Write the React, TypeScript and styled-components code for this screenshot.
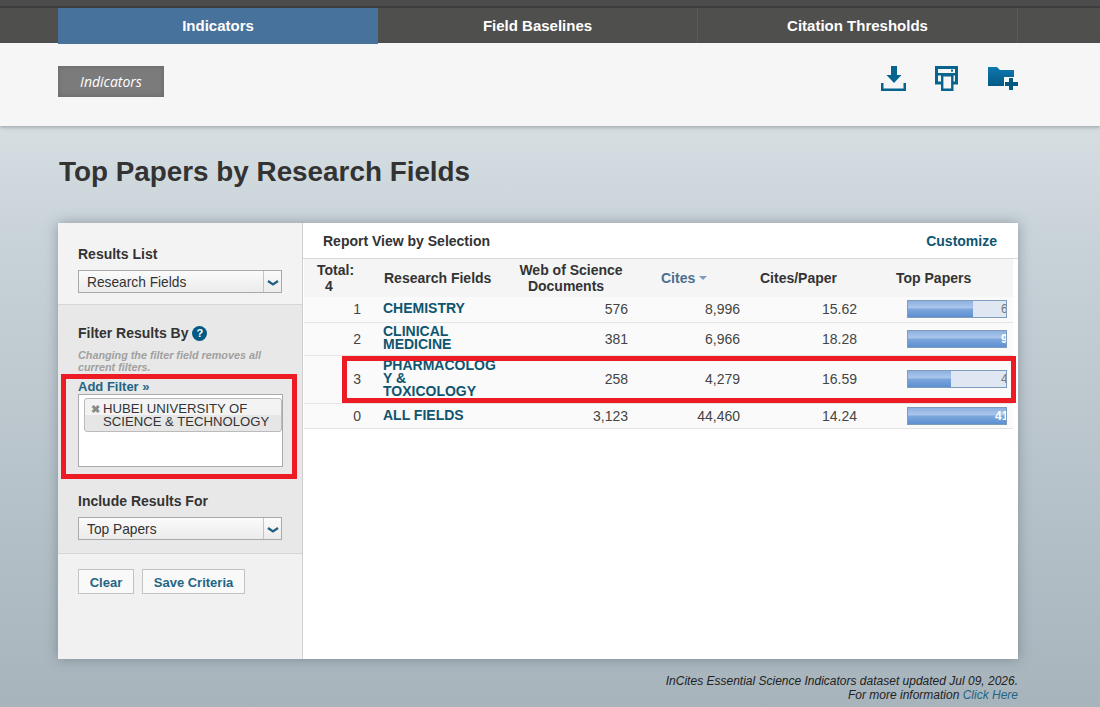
import React from "react";
import styled, { createGlobalStyle } from "styled-components";

const GlobalStyle = createGlobalStyle`
  html, body { margin: 0; padding: 0; }
  body { font-family: "Liberation Sans", Arial, sans-serif; color: #333; }
  * { box-sizing: border-box; }
`;

const Page = styled.div`
  position: relative;
  width: 1100px;
  height: 707px;
  overflow: hidden;
  background: linear-gradient(180deg, #d6dee2 126px, #c9d3d9 230px, #a7b4bc 100%);
`;

const TopStrip = styled.div`
  height: 8px;
  background: #4c4c4c;
  border-bottom: 2px solid #3e3e3e;
`;

const NavBar = styled.nav`
  height: 35px;
  background: #4f4f4e;
  padding: 0 82px 0 58px;
  display: flex;
`;

const Tab = styled.div<{ $active?: boolean }>`
  width: 320px;
  height: ${(p) => (p.$active ? "36px" : "35px")};
  padding-bottom: ${(p) => (p.$active ? "1px" : "0")};
  display: flex;
  align-items: center;
  justify-content: center;
  color: #fff;
  font-size: 15px;
  font-weight: bold;
  background: ${(p) => (p.$active ? "#47729c" : "transparent")};
  border-right: ${(p) => (p.$active ? "none" : "1px solid #5a5a5a")};
  position: relative;
  z-index: 1;
`;

const SubBand = styled.div`
  height: 83px;
  background: #f6f6f6;
  box-shadow: 0 1px 4px rgba(60, 70, 75, 0.45);
  padding: 23px 82px 0 58px;
  display: flex;
  justify-content: space-between;
  align-items: flex-start;
`;

const Crumb = styled.div`
  width: 106px;
  height: 31px;
  background: #7b7b7b;
  box-shadow: inset 0 0 5px #666;
  color: #fff;
  font-family: "Open Sans", sans-serif;
  font-style: italic;
  font-size: 14px;
  display: flex;
  align-items: center;
  justify-content: center;
`;

const Actions = styled.div`
  display: flex;
  align-items: flex-start;
`;

const ActionIcon = styled.svg<{ $gap?: number }>`
  display: block;
  margin-left: ${(p) => p.$gap ?? 0}px;
`;

const Title = styled.h1`
  margin: 0;
  padding: 28px 0 0 59px;
  height: 97px;
  font-size: 27.85px;
  line-height: 35px;
  font-weight: bold;
  color: #333;
`;

const Panel = styled.main`
  width: 960px;
  height: 436px;
  margin-left: 58px;
  display: flex;
  background: #fff;
  box-shadow: 0 0 12px rgba(70, 85, 95, 0.45);
`;

const Sidebar = styled.aside`
  width: 245px;
  flex: none;
  display: flex;
  flex-direction: column;
  background: #f1f1f1;
  border-right: 1px solid #cfcfcf;
`;

const ResultsSection = styled.section`
  height: 82px;
  padding: 23px 20px 0;
  border-bottom: 1px solid #d6d6d6;
  background: #f3f3f3;
`;

const FilterSection = styled.section`
  height: 249px;
  padding: 20px 20px 0;
  background: #e8e8e8;
  border-bottom: 1px solid #d6d6d6;
`;

const ButtonSection = styled.section`
  flex: 1;
  padding: 15px 20px 0;
  display: flex;
  align-items: flex-start;
  gap: 8px;
`;

const SideLabel = styled.div<{ $top?: number }>`
  margin-top: ${(p) => p.$top ?? 0}px;
  font-size: 14px;
  line-height: 16px;
  font-weight: bold;
  color: #333;
  display: flex;
  align-items: center;
  gap: 4px;
`;

const HelpDot = styled.span`
  width: 15px;
  height: 15px;
  border-radius: 50%;
  background: #005a84;
  color: #fff;
  font-size: 11px;
  font-weight: bold;
  display: inline-flex;
  align-items: center;
  justify-content: center;
`;

const Hint = styled.p`
  margin: 8px 0 0;
  font-size: 10.8px;
  line-height: 12px;
  font-weight: bold;
  font-style: italic;
  color: #a0a0a0;
`;

const AddFilter = styled.a`
  display: block;
  margin-top: 7px;
  font-size: 13px;
  line-height: 14px;
  font-weight: bold;
  color: #1f6585;
`;

const FilterBox = styled.div`
  width: 205px;
  height: 73px;
  padding: 3px 0 0 5px;
  background: #fff;
  border: 1px solid #aaa;
`;

const FilterChip = styled.div`
  width: 198px;
  height: 34px;
  padding: 3px 0 0 6px;
  border: 1px solid #bbb;
  border-radius: 3px;
  background: linear-gradient(180deg, #f3f3f3 50%, #e6e6e6 50%);
  display: flex;
  gap: 3px;
  font-size: 13.15px;
  line-height: 13px;
  color: #333;
`;

const ChipClose = styled.span`
  color: #8a8a8a;
  font-size: 11px;
  font-weight: bold;
  line-height: 14px;
`;

const SelectBox = styled.div`
  margin-top: 8px;
  width: 204px;
  height: 23px;
  border: 1px solid #a9a9a9;
  background: linear-gradient(180deg, #fbfbfb, #ebebeb);
  display: flex;
  align-items: center;
  font-size: 13.75px;
  color: #333;
  padding-left: 8px;
`;

const SelectText = styled.span`
  flex: 1;
  padding-top: 1px;
`;

const SelectArrow = styled.span`
  width: 18px;
  height: 100%;
  border-left: 1px solid #c4c4c4;
  display: flex;
  align-items: center;
  justify-content: center;
  padding-top: 3px;
`;

const Button = styled.button<{ $width: number }>`
  width: ${(p) => p.$width}px;
  height: 25px;
  padding: 1px 0 0;
  border: 1px solid #c2c2c2;
  background: #f9f9f9;
  color: #1f6585;
  font-family: inherit;
  font-size: 13px;
  font-weight: bold;
`;

const Report = styled.div`
  flex: 1;
  display: flex;
  flex-direction: column;
`;

const ReportHead = styled.div`
  height: 36px;
  padding: 0 21px 0 20px;
  border-bottom: 1px solid #d9d9d9;
  display: flex;
  align-items: center;
  justify-content: space-between;
`;

const ReportTitle = styled.div`
  font-size: 14px;
  font-weight: bold;
  color: #333;
`;

const Customize = styled.a`
  font-size: 14px;
  font-weight: bold;
  color: #0f5570;
`;

const Table = styled.table`
  width: 709px;
  margin-left: 1px;
  border-collapse: collapse;
  table-layout: fixed;
`;

const HeadRow = styled.tr`
  height: 38px;
  background: #f5f5f5;
`;

const Th = styled.th<{ $align?: string; $pad?: number; $sorted?: boolean }>`
  padding: 0;
  padding-left: ${(p) => p.$pad ?? 0}px;
  text-align: ${(p) => p.$align ?? "left"};
  font-size: 14px;
  line-height: 16px;
  font-weight: bold;
  color: ${(p) => (p.$sorted ? "#4b6f91" : "#333")};
`;

const TotalCount = styled.span`
  display: block;
  padding-left: 8px;
`;

const DocsLine = styled.span`
  display: block;
  padding-right: 10px;
`;

const SortCaret = styled.span`
  display: inline-block;
  width: 0;
  height: 0;
  margin-left: 4px;
  vertical-align: 3px;
  border-left: 4px solid transparent;
  border-right: 4px solid transparent;
  border-top: 4px solid #7d9cc0;
`;

const Row = styled.tr<{ $height: number }>`
  height: ${(p) => p.$height}px;
  background: #fafafa;
  border-bottom: 1px solid #e4e4e4;
`;

const NumCell = styled.td<{ $pr: number }>`
  padding: 0 ${(p) => p.$pr}px 0 0;
  text-align: right;
  font-size: 14px;
  color: #444;
`;

const FieldCell = styled.td`
  padding: 0 0 1px 11px;
  font-size: 14px;
  line-height: 13px;
  font-weight: bold;
  color: #0f5570;
  overflow-wrap: anywhere;
`;

const BarCell = styled.td`
  padding: 0 0 0 38px;
`;

const Bar = styled.div`
  position: relative;
  width: 100px;
  height: 18px;
  overflow: hidden;
  background: #dfe7f3;
  border: 1px solid #7f9bbd;
`;

const BarFill = styled.div`
  height: 100%;
  background: linear-gradient(180deg, #8db0e0 0%, #adc8ec 45%, #7ea8de 48%, #5d8fd0 100%);
`;

const BarLabel = styled.span<{ $light?: boolean; $left: number }>`
  position: absolute;
  top: 1px;
  left: ${(p) => p.$left}px;
  font-size: 12px;
  line-height: 14px;
  font-weight: ${(p) => (p.$light ? "bold" : "normal")};
  color: ${(p) => (p.$light ? "#fff" : "#777")};
  white-space: nowrap;
`;

const Footer = styled.footer`
  width: 960px;
  margin: 15px 0 0 58px;
  text-align: right;
  font-size: 12px;
  line-height: 14px;
  font-style: italic;
  color: #222;
`;

const FooterLink = styled.a`
  color: #1f6585;
`;

const Callout = styled.div<{ $x: number; $y: number; $w: number; $h: number }>`
  position: absolute;
  left: ${(p) => p.$x}px;
  top: ${(p) => p.$y}px;
  width: ${(p) => p.$w}px;
  height: ${(p) => p.$h}px;
  border: 5px solid #ed1c24;
  pointer-events: none;
`;

const Chevron = () => (
  <svg width="12" height="6" viewBox="0 0 12 6" aria-hidden>
    <path d="M1 1 L6 4.5 L11 1" fill="none" stroke="#1d5f85" strokeWidth="2.2" />
  </svg>
);

const rows = [
  { rank: 1, field: "CHEMISTRY", docs: "576", cites: "8,996", perPaper: "15.62", top: 6, pct: 66, h: 25 },
  { rank: 2, field: "CLINICAL MEDICINE", docs: "381", cites: "6,966", perPaper: "18.28", top: 9, pct: 100, h: 33 },
  { rank: 3, field: "PHARMACOLOGY & TOXICOLOGY", docs: "258", cites: "4,279", perPaper: "16.59", top: 4, pct: 44, h: 48 },
  { rank: 0, field: "ALL FIELDS", docs: "3,123", cites: "44,460", perPaper: "14.24", top: 41, pct: 100, h: 25 },
];

export default function App() {
  return (
    <Page>
      <GlobalStyle />
      <TopStrip />
      <NavBar>
        <Tab $active>Indicators</Tab>
        <Tab>Field Baselines</Tab>
        <Tab>Citation Thresholds</Tab>
      </NavBar>
      <SubBand>
        <Crumb>Indicators</Crumb>
        <Actions>
          <ActionIcon width="25" height="25" viewBox="0 0 25 25">
            <path d="M10 0h6v9h4.5l-7.5 8-7.5-8H10z" fill="#07648f" />
            <path d="M1.25 17v6.75h22.5V17" fill="none" stroke="#07648f" strokeWidth="2.5" />
          </ActionIcon>
          <ActionIcon $gap={29} width="23" height="25" viewBox="0 0 23 25">
            <path d="M1.5 1.5h20v15.5h-20z" fill="none" stroke="#07648f" strokeWidth="3" />
            <rect x="3" y="7" width="17" height="2.5" fill="#07648f" />
            <rect x="16" y="3.6" width="2" height="2" fill="#07648f" />
            <path d="M7.2 9.2h10.1v14.6H7.2z" fill="#f6f6f6" stroke="#07648f" strokeWidth="2.4" />
          </ActionIcon>
          <ActionIcon $gap={30} width="30" height="25" viewBox="0 0 30 25">
            <defs>
              <linearGradient id="folderFill" x1="0" y1="0" x2="0" y2="1">
                <stop offset="0" stopColor="#0d78b0" />
                <stop offset="1" stopColor="#045a85" />
              </linearGradient>
            </defs>
            <path d="M0 1h9l3 3h14v16H0z" fill="url(#folderFill)" />
            <rect x="16" y="11" width="14" height="13" fill="#f6f6f6" />
            <path d="M21 12h4v4h5v4h-5v4h-4v-4h-4v-4h4z" fill="#055a80" />
          </ActionIcon>
        </Actions>
      </SubBand>
      <Title>Top Papers by Research Fields</Title>
      <Panel>
        <Sidebar>
          <ResultsSection>
            <SideLabel>Results List</SideLabel>
            <SelectBox>
              <SelectText>Research Fields</SelectText>
              <SelectArrow><Chevron /></SelectArrow>
            </SelectBox>
          </ResultsSection>
          <FilterSection>
            <SideLabel>Filter Results By <HelpDot>?</HelpDot></SideLabel>
            <Hint>Changing the filter field removes all current filters.</Hint>
            <AddFilter>Add Filter »</AddFilter>
            <FilterBox>
              <FilterChip>
                <ChipClose>✖</ChipClose>
                <span>HUBEI UNIVERSITY OF<br />SCIENCE &amp; TECHNOLOGY</span>
              </FilterChip>
            </FilterBox>
            <SideLabel $top={26}>Include Results For</SideLabel>
            <SelectBox>
              <SelectText>Top Papers</SelectText>
              <SelectArrow><Chevron /></SelectArrow>
            </SelectBox>
          </FilterSection>
          <ButtonSection>
            <Button $width={56}>Clear</Button>
            <Button $width={103}>Save Criteria</Button>
          </ButtonSection>
        </Sidebar>
        <Report>
          <ReportHead>
            <ReportTitle>Report View by Selection</ReportTitle>
            <Customize>Customize</Customize>
          </ReportHead>
          <Table>
            <colgroup>
              <col width="68" />
              <col width="124" />
              <col width="144" />
              <col width="112" />
              <col width="117" />
              <col width="144" />
            </colgroup>
            <thead>
              <HeadRow>
                <Th $pad={13}>Total:<TotalCount>4</TotalCount></Th>
                <Th $pad={12}>Research Fields</Th>
                <Th $align="center" $pad={6}>Web of Science<DocsLine>Documents</DocsLine></Th>
                <Th $pad={21} $sorted>Cites<SortCaret /></Th>
                <Th $pad={8}>Cites/Paper</Th>
                <Th $pad={27}>Top Papers</Th>
              </HeadRow>
            </thead>
            <tbody>
              {rows.map((r) => (
                <Row key={r.rank} $height={r.h}>
                  <NumCell $pr={11}>{r.rank}</NumCell>
                  <FieldCell>{r.field}</FieldCell>
                  <NumCell $pr={12}>{r.docs}</NumCell>
                  <NumCell $pr={12}>{r.cites}</NumCell>
                  <NumCell $pr={12}>{r.perPaper}</NumCell>
                  <BarCell>
                    <Bar>
                      <BarFill style={{ width: `${r.pct}%` }} />
                      <BarLabel $light={r.pct === 100} $left={r.top > 9 ? 87 : 93}>{r.top}</BarLabel>
                    </Bar>
                  </BarCell>
                </Row>
              ))}
            </tbody>
          </Table>
        </Report>
      </Panel>
      <Footer>
        InCites Essential Science Indicators dataset updated Jul 09, 2026.<br />
        For more information <FooterLink>Click Here</FooterLink>
      </Footer>
      <Callout $x={61} $y={374} $w={236} $h={105} />
      <Callout $x={342} $y={356} $w={674} $h={47} />
    </Page>
  );
}
